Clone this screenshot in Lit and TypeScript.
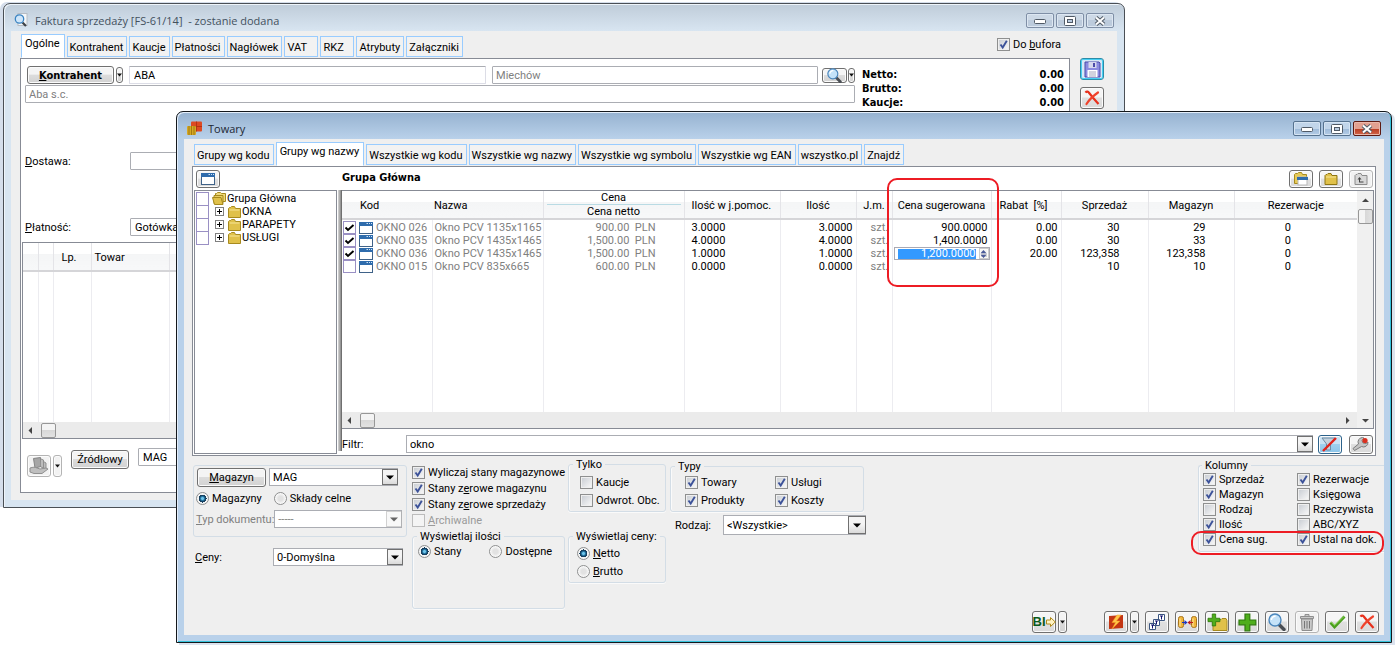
import { LitElement, html, css, svg, nothing, TemplateResult } from "lit";
import { customElement, property } from "lit/decorators.js";
import { classMap } from "lit/directives/class-map.js";

const controls = css`
  * { box-sizing: border-box; }
  button, input, select { font: inherit; color: inherit; margin: 0; }
  button {
    display: inline-flex; align-items: center; justify-content: center;
    padding: 0; border: 1px solid #707070; border-radius: 3px;
    background: linear-gradient(#f4f4f4 45%, #dcdcdc 50%, #d2d2d2);
    box-shadow: inset 0 0 0 1px #fbfbfb;
  }
`;

/* ---------- icons ---------- */
const ico = (w: number, h: number, body: unknown) =>
  html`<svg width=${w} height=${h} viewBox="0 0 ${w} ${h}" aria-hidden="true">${body}</svg>`;

const caret = () => ico(5, 4, svg`<path d="M0 0.5h5L2.5 3.5z" fill="#111"/>`);
const caretWide = () => ico(8, 5, svg`<path d="M0 0.5h8L4 4.5z" fill="#000"/>`);
const lens = () => ico(18, 18, svg`
  <path d="M11 11.5l5 5" stroke="#4a4e54" stroke-width="3.4" stroke-linecap="round"/>
  <circle cx="7" cy="7" r="6" fill="#c4e2f8" stroke="#4a86bc" stroke-width="1.4"/>
  <path d="M3.4 7a3.8 3.8 0 0 1 4.2-3.8" fill="none" stroke="#fff" stroke-width="1.4"/>`);
const cross = () => ico(16, 16, svg`
  <path d="M1.5 2.6C2.6 1 4.3 1.6 5 2.8l4 5 5.500 6.200" stroke="#e8301c" stroke-width="2.200" fill="none"/>
  <path d="M14 2.500C9 6 5 10 2.500 14" stroke="#f0432c" stroke-width="2.200" fill="none" stroke-linecap="round"/>`);
const disk = () => ico(17, 17, svg`
  <path d="M1 1h14l1 1v14H1z" fill="#8c8ce0" stroke="#4b4ba8"/>
  <rect x="4.5" y="1" width="8" height="6" fill="#d6d8ee"/><rect x="9" y="2" width="2" height="4" fill="#4b4ba8"/>
  <rect x="3.5" y="9" width="10" height="7" fill="#fff"/>
  <path d="M5 11h7M5 13h7M5 15h7" stroke="#a4a6bd"/>`);
const winIcon = () => ico(14, 12, svg`
  <rect x="0.5" y="0.5" width="13" height="11" fill="#fff" stroke="#3f6288"/>
  <rect x="0" y="0" width="14" height="4" fill="#2f6cac"/>
  <path d="M7.5 1.5h1.5M10 1.5h1M12 1.5h1" stroke="#cfe2f5"/>`);
const folder = () => ico(13, 12, svg`
  <path d="M0.5 2.5l1-1h1l1-1h3l1 2h5v9h-12z" fill="#e0c14a" stroke="#a78a1e"/>
  <path d="M1.5 4h10" stroke="#f7e697"/>`);
const folders = () => ico(14, 13, svg`
  <path d="M3.5 1.5h1l1-1h3l1 1h4v8h-10z" fill="#efd978" stroke="#a78a1e"/>
  <path d="M2 3.5h9v8H2z" fill="#e8cd62" stroke="#a78a1e"/>
  <path d="M0.5 5.5h8.5l2 7H2.5z" fill="#e0c14a" stroke="#a78a1e"/>`);
const folderOpen = () => ico(16, 15, svg`
  <path d="M1.5 3.5l1-1h2l1-1h3l1 2h4v9h-12z" fill="#e6ca58" stroke="#a78a1e"/>
  <rect x="5" y="6" width="9" height="8" fill="#fff" stroke="#b9b9b9"/><rect x="4" y="6" width="11" height="3" fill="#2f6cac"/>`);
const folderBig = () => ico(14, 14, svg`
  <path d="M1 3.5l1-1h1l1-1h3l1 2h5v9H1z" fill="#e0c14a" stroke="#8f7614"/><path d="M2 5h10" stroke="#f7e697"/>`);
const folderUp = () => ico(14, 14, svg`
  <path d="M1 3.5l1-1h1l1-1h3l1 2h5v9H1z" fill="#d8d8d8" stroke="#8c8c8c"/>
  <path d="M5 10h4.5M5.5 10V6" stroke="#444" fill="none"/><path d="M3.5 7.5l2-2.5 2 2.5z" fill="#444"/>`);
const bricks = () => ico(16, 15, svg`
  <rect x="4" y="0.500" width="11" height="10" fill="#dd4a22" rx="1"/><path d="M4 5.500h11M9.500 0.500v10" stroke="#a92c10" stroke-width="0.800"/>
  <rect x="0" y="5" width="9" height="9" fill="#d6a824" rx="1"/><path d="M2 5v9M4.500 5v9M7 5v9" stroke="#93700c" stroke-width="0.800"/>`);
const docLens = () => ico(15, 15, svg`
  <rect x="4" y="0.5" width="9" height="12" fill="#f5f7f9" stroke="#b5bcc4"/>
  <path d="M8.5 9.5l3.5 3.5" stroke="#3d4248" stroke-width="2.2"/>
  <circle cx="5.5" cy="6" r="4.2" fill="#cfe6fa" stroke="#3b84c2" stroke-width="1.3"/>`);
const hand = () => ico(20, 18, svg`
  <path d="M4.500 1.500l7-1 0.500 9-6 1.500z" fill="#a6a6a6" stroke="#858585"/>
  <path d="M12 2l2.500 1v8l-2.500-1M14.500 4.500l2.500 1.500v6l-2.500-1" fill="#bdbdbd" stroke="#909090"/>
  <path d="M1 11c3-1 5-1 7 0l3 1 6-1 2 1-6 4.500H5L1 15z" fill="#bfbfbf" stroke="#909090"/>`);
const funnel = () => ico(18, 15, svg`
  <path d="M1 1h13l-4.5 6v6h-4V7z" fill="#c3d2de" stroke="#6f8ba3"/><path d="M2 14L15 1" stroke="#e0241b" stroke-width="2.4"/>`);
const wrench = () => ico(18, 16, svg`
  <path d="M2.500 14.500l-1.500-2 5.500-4.500a4.500 4.500 0 0 1 4-6.500l1.500 0.500-2 2.500 1 2.500 3 0.500 2-1.500a4.500 4.500 0 0 1-6.500 4.500z" fill="#c4c4c4" stroke="#7c7c7c"/>
  <circle cx="13" cy="4.500" r="2.600" fill="#d9301f"/>`);
const bi = () => html`<span class="bi">BI</span>${ico(10, 12, svg`
  <path d="M0.5 4h4V1.5L9.3 6 4.5 10.5V8h-4z" fill="#fff3c4" stroke="#b08a1b"/>`)}`;
const bolt = () => ico(16, 16, svg`
  <path d="M1 2l14-1v13L1 15z" fill="#c33614"/><path d="M9 1L4 8.5h3.5L4 15l8-8H8.5L13 1z" fill="#ffc64a" stroke="#f9a11f" stroke-width="0.5"/>`);
const tees = () => ico(18, 18, svg`
  <g fill="#fff" stroke="#3a5580"><path d="M10.5 1.5h6v6h-6zM5.5 6.5h6v6h-6zM1.5 10.5h6v6h-6z"/></g>
  <path d="M12 3h3M13.5 3v3.500M7 8h3M8.500 8v3.500M3 12h3M4.500 12v3.500" stroke="#10106e"/>`);
const barrels = () => ico(19, 14, svg`
  <g fill="#f0b53a" stroke="#a9741a"><rect x="0.5" y="1.5" width="5" height="11" rx="2"/><rect x="13.5" y="1.5" width="5" height="11" rx="2"/></g>
  <path d="M2 3.5v8M15 3.5v8" stroke="#ffe9a8"/>
  <path d="M4 7.5h4" stroke="#1a35c0"/><path d="M6.500 5L9.500 7.500l-3 2.500z" fill="#1a35c0"/>
  <path d="M11 7.5h4" stroke="#c01a1a"/><path d="M12.500 5L9.500 7.500l3 2.500z" fill="#c01a1a"/>`);
const plusShape = (x: number, y: number, s: number) => svg`
  <path transform="translate(${x} ${y}) scale(${s})" d="M5 0h4v5h5v4H9v5H5V9H0V5h5z" fill="#4fae1c" stroke="#2f7a0c"/>`;
const plus = () => ico(19, 19, plusShape(1, 1, 1.2));
const folderPlus = () => ico(21, 18, svg`
  <path d="M6 6.5h8l1-1h4l1 2v10H6z" fill="#e0c14a" stroke="#a78a1e"/>${plusShape(1, 1, 0.85)}`);
const bin = () => ico(14, 17, svg`
  <path d="M5 2V0.5h4V2M0.5 2.5h13v2H0.5zM1.5 5h11l-0.5 11.5h-10z" fill="#c9c9c9" stroke="#8f8f8f"/>
  <path d="M4.5 7v7.5M7 7v7.5M9.5 7v7.5" stroke="#777"/>`);
const tick = () => ico(17, 14, svg`
  <path d="M1.5 7.5l4 4.5L15.5 1.5" fill="none" stroke="#4a9e1e" stroke-width="2.8"/>
  <path d="M2 7l3.500 3.500L15 1.500" fill="none" stroke="#86d04f" stroke-width="1"/>`);
const arrow = (dir: "l" | "r" | "u" | "d") =>
  ico(7, 7, svg`<path d=${{ l: "M5 0v7L1.500 3.500z", r: "M2 0v7L5.500 3.500z", u: "M0 5h7L3.500 1.500z", d: "M0 2h7L3.500 5.500z" }[dir]} fill="#444"/>`);

/* ---------- framed window ---------- */
@customElement("desk-window")
export class DeskWindow extends LitElement {
  @property() caption = "";
  @property({ type: Boolean, reflect: true }) active = false;
  static styles = [controls, css`
    :host { display: block; }
    .frame {
      border: 1px solid #4a4f55; border-radius: 7px 7px 0 0; padding: 0 7px 7px;
      background: linear-gradient(#bfccd9, #d8e5f1 27px); box-shadow: inset 1px 1px 0 #eef4fa, -3px -1px 0 #d5deeb;
    }
    :host([active]) .frame {
      border-color: #14181c;
      background: linear-gradient(#96b2d0, #b9d1ea 27px);
      box-shadow: inset 1px 1px 0 #e4eefa, inset -1px -1px 0 #35c3dc, 3px 2px 0 #dbe3ee;
    }
    .bar { height: 27px; display: flex; align-items: center; gap: 5px; padding: 6px 3px 0 3px; }
    .bar ::slotted(*) { display: block; width: 16px; height: 16px; }
    h1 {
      margin: 0; flex: 1; white-space: pre; color: #43515e;
      font: 400 11px/16px "Open Sans", "Noto Sans", sans-serif;
    }
    :host([active]) h1 { color: #1c2733; }
    .tools { display: flex; gap: 2px; }
    .tools button {
      width: 28px; height: 15px; border-color: #7f8fa6; border-radius: 2px;
      background: linear-gradient(#cdd9e6 50%, #bccbdc 50%); box-shadow: inset 0 0 0 1px #dde7f2;
    }
    :host([active]) .tools button { border-color: #56728f; background: linear-gradient(#c1d5ea 50%, #9cb9d8 50%, #b4cce6); box-shadow: inset 0 0 0 1px #d5e4f3; }
    :host([active]) .tools button.close {
      border-color: #5d1a12; background: linear-gradient(#e2a090 50%, #b83a20 50%, #d2664a); box-shadow: inset 0 0 0 1px #eab7aa;
    }
    .body { background: #efefef; display: flow-root; }
  `];
  render() {
    return html`<section class="frame" aria-label=${this.caption}>
      <header class="bar">
        <slot name="icon"></slot>
        <h1>${this.caption}</h1>
        <div class="tools">
          <button aria-label="Minimalizuj">${ico(12, 6, svg`<rect x="0.5" y="1.5" width="11" height="4" rx="1" fill="#fff" stroke="#505a66"/>`)}</button>
          <button aria-label="Maksymalizuj">${ico(12, 10, svg`<rect x="0.5" y="0.5" width="11" height="9" rx="1" fill="#fff" stroke="#505a66"/><rect x="3.5" y="3.5" width="5" height="3" fill="#b9cbe0" stroke="#505a66"/>`)}</button>
          <button class="close" aria-label="Zamknij">${ico(12, 10, svg`<path d="M2 1.5l8 7M10 1.5l-8 7" stroke="#505a66" stroke-width="4"/><path d="M2 1.5l8 7M10 1.5l-8 7" stroke="#fff" stroke-width="2"/>`)}</button>
        </div>
      </header>
      <div class="body"><slot></slot></div>
    </section>`;
  }
}

type Item = { label: string | TemplateResult; on?: boolean; off?: boolean };

const products = [
  { on: true, code: "OKNO 026", name: "Okno PCV 1135x1165", price: "900.00", qty: "3.0000", sug: "900.0000", disc: "0.00", sold: "30", stock: "29" },
  { on: true, code: "OKNO 035", name: "Okno PCV 1435x1465", price: "1,500.00", qty: "4.0000", sug: "1,400.0000", disc: "0.00", sold: "30", stock: "33" },
  { on: true, code: "OKNO 036", name: "Okno PCV 1435x1465", price: "1,500.00", qty: "1.0000", sug: "1,200.0000", disc: "20.00", sold: "123,358", stock: "123,358", edit: true },
  { on: false, code: "OKNO 015", name: "Okno PCV 835x665", price: "600.00", qty: "0.0000", sug: "", disc: "", sold: "10", stock: "10" },
];

@customElement("app-root")
export class AppRoot extends LitElement {
  static styles = [controls, css`
    :host {
      display: block; position: relative; min-height: 100vh; overflow: hidden; background: #fff;
      color: #000; font: 11px/13px Roboto, "Noto Sans", sans-serif; white-space: nowrap;
    }
    b, .bold, .totals { font-family: "DejaVu Sans Condensed", "Noto Sans", sans-serif; font-weight: 700; }
    svg { display: block; flex: none; }
    desk-window { position: absolute; }
    .invoice { top: 3px; left: 3px; right: 270px; }
    .goods { top: 111px; left: 176px; right: 3px; }

    /* tabs */
    .tabs { display: flex; align-items: flex-end; gap: 2px; padding-left: 10px; height: 27px; }
    .tabs button {
      height: 21px; min-width: 34px; margin-bottom: 1px; padding: 1px 3px 0 2px; border: 1px solid #99ccff; border-radius: 0;
      background: #f2f2f2; box-shadow: none; justify-content: flex-start;
    }
    .tabs button.sel { height: 24px; margin: 0; padding: 0 4px 5px 3px; background: #fff; border-bottom-color: #fff; }

    /* fields */
    .text { height: 18px; padding: 0 4px; border: 1px solid #abadb3; background: #fff; border-radius: 1px; min-width: 0; }
    .dim { color: #808080; }
    .push { height: 19px; padding: 0 10px; }
    .icon { width: 24px; height: 22px; background: linear-gradient(#f5f5f5 45%, #e0e0e0 50%, #dadada); flex: none; }
    .icon.low { height: 19px; }
    .drop { width: 9px; height: 22px; flex: none; }
    .pale { border-color: #b4b4b4; background: #f2f2f2; }
    .hot { border-color: #2c8ca8; box-shadow: inset 0 0 0 1px #46d0f4; background: #d8e8f6; }
    .pressed { border-color: #2c628b; background: linear-gradient(#c9e3f5 45%, #9fd0ee 50%, #8cc5ea); }
    .combo { position: relative; display: block; height: 18px; }
    .combo select, .combo input {
      appearance: none; width: 100%; height: 100%; padding: 0 18px 0 3px; border: 1px solid #abadb3; border-radius: 0; background: #fff; display: block; color: inherit; opacity: 1;
    }
    .combo .arr {
      position: absolute; top: 1px; right: 0; bottom: 1px; width: 16px; border: 1px solid #707070; background: linear-gradient(#f4f4f4 45%, #dadada);
      pointer-events: none; display: flex; align-items: center; justify-content: center;
    }
    .combo.dim .arr { border-color: #b4b4b4; background: #f4f4f4; opacity: .6; }

    label.opt { display: inline-flex; align-items: center; gap: 3px; height: 16px; }
    label.opt.dim { color: #9a9a9a; }
    input[type="checkbox"], input[type="radio"] { appearance: none; flex: none; width: 13px; height: 13px; border: 1px solid #8e8f8f; }
    input[type="checkbox"] {
      background: no-repeat center / 11px 11px, linear-gradient(135deg, #cbcfd5, #f6f6f6) content-box #f4f4f4; padding: 1px;
    }
    input[type="checkbox"]:checked {
      background-image: url("data:image/svg+xml,%3Csvg xmlns='http://www.w3.org/2000/svg' viewBox='0 0 11 11'%3E%3Cpath d='M2.500 5.500l2.200 3L8.800 1.800' fill='none' stroke='%233c5299' stroke-width='1.900'/%3E%3C/svg%3E"), linear-gradient(135deg, #cbcfd5, #f6f6f6);
    }
    input[type="checkbox"]:disabled { border-color: #bcbcbc; background: #f4f4f4; }
    input[type="checkbox"].sq { border: 1px solid #9a90c4; background: #fff; }
    input[type="checkbox"].sq:checked {
      background: #fff url("data:image/svg+xml,%3Csvg xmlns='http://www.w3.org/2000/svg' viewBox='0 0 11 11'%3E%3Cpath d='M1.500 5.500l2.500 2.500L9.500 3' fill='none' stroke='%23000' stroke-width='1.900'/%3E%3C/svg%3E") center / 11px 11px no-repeat;
    }
    input[type="radio"] { border-radius: 50%; background: radial-gradient(circle, #e2e2e2 30%, #fbfbfb 70%); }
    input[type="radio"]:checked { background: radial-gradient(circle, #6fc4e8 0 1px, #2378a8 2px, #17405f 3px 4px, #f4f4f4 4px); }

    fieldset { margin: 0; padding: 0 0 0 8px; border: 1px solid #d3dde6; border-radius: 3px; box-shadow: inset 1px 0 0 #fafafa, 0 1px 0 #fafafa; min-width: 0; }
    legend { padding: 0 3px; margin-left: -4px; line-height: 13px; }

    /* invoice window */
    .top { display: flex; align-items: center; justify-content: space-between; padding-right: 56px; }
    .split { display: flex; gap: 10px; padding: 0 13px 7px 9px; }
    .sheet { flex: 1; min-width: 0; border: 1px solid #878b95; background: #fff; padding: 7px 5px 15px 4px; }
    .side { display: flex; flex-direction: column; gap: 7px; }
    .head { display: grid; grid-template-columns: 1fr 203px; column-gap: 6px; }
    .line { display: flex; align-items: center; }
    .head .line { padding-left: 2px; height: 18px; }
    .who { width: 87px; height: 18px; }
    .mini { width: 7px; height: 16px; margin-left: 2px; }
    .city { flex: 326 1 0; margin-left: 6px; padding-left: 3px; }
    .name { flex: 357 1 0; margin-left: 6px; border-color: #dcdde6; border-top-color: #abadb3; }
    .find { width: 25px; height: 15px; margin-left: 4px; }
    .find svg { width: 15px; height: 15px; }
    .find + .mini { margin-left: 1px; height: 15px; }
    .company { display: block; width: 100%; margin-top: 1px; padding-left: 3px; }
    .totals { margin: 0; padding: 2px 0 0 1px; display: grid; grid-template-columns: 1fr auto; line-height: 14px; align-content: start; }
    .totals dd { margin: 0; text-align: right; }
    .field { display: flex; align-items: center; height: 18px; }
    .field label { width: 105px; }
    .field input { width: 330px; }
    .delivery { margin-top: 42px; }
    .payment { margin-top: 48px; margin-bottom: 6px; }
    .box { border: 1px solid #878b95; background: #fff; margin-left: -3px; }
    table { border-collapse: collapse; table-layout: fixed; width: 100%; }
    th {
      font-weight: 400; height: 28px; padding: 2px 0 0; border-right: 1px solid #e4e4e8; border-bottom: 2px solid #d5d5d8;
      background: linear-gradient(#fff 40%, #f4f5f6 40%, #f7f8f9);
    }
    th:last-child, td:last-child { border-right: 0; }
    td { border-right: 1px solid #ececf0; padding: 0; overflow: hidden; }
    .lines .pad td { height: 151px; }
    .lines th { text-align: left; padding-left: 3px; }
    .lines th.num { padding-left: 8px; }
    .hscroll { height: 16px; background: #ebebeb; display: flex; align-items: center; padding: 0 6px 0 4px; }
    .thumb { width: 15px; height: 15px; margin-left: 7px; border: 1px solid #979797; border-radius: 2px; background: linear-gradient(#f4f4f4 45%, #d8d8d8 50%, #e2e2e2); }
    .foot { display: flex; gap: 9px; padding: 9px 0 0 2px; align-items: flex-start; }
    .foot .pair { margin-top: 7px; }
    .pair { display: flex; gap: 2px; }
    .foot .push { margin-top: 2px; width: 58px; padding: 0; }
    .foot .text { width: 200px; }

    /* goods window */
    .panel { margin: 0 8px; border: 1px solid #878b95; background: #fff; padding-left: 1px; display: grid; grid-template-columns: 143px 5px 1fr; }
    .bar23 { height: 23px; display: flex; align-items: center; }
    .left .bar23 { padding-left: 2px; }
    .bar23 .icon { height: 18px; }
    .tree { height: 264px; border: 1px solid #878b95; padding: 1px; margin: 0; list-style: none; }
    .tree li { display: flex; align-items: center; height: 13px; }
    .tree .sq { height: 14px; margin-right: 3px; }
    .exp { width: 9px; height: 9px; margin: 0 4px 0 3px; border: 1px solid #808080; background: #fff; padding: 0; border-radius: 0; box-shadow: none; }
    .tree span { margin-left: 1px; }
    .bar-split { margin-top: 23px; height: 261px; background: linear-gradient(90deg, #fff 1px, #d8d8d8 1px, #8a8a8a 4px, #555); }
    .right { min-width: 0; padding-right: 1px; }
    .right .bar23 { gap: 6px; padding-right: 1px; }
    .right .bar23 b { flex: 1; padding-bottom: 2px; }
    .grid { border: 1px solid #878b95; border-left-width: 0; display: grid; grid-template-columns: 1fr 16px; }
    .rows { overflow: hidden; }
    .rows td { height: 13px; line-height: 13px; text-align: right; }
    .rows .gap td { height: 2px; }
    .rows .pad td { height: 139px; }
    .rows th.group { padding: 0; }
    .rows .c1 { width: 90px; } .rows .c2 { width: 111px; } .rows .c3 { width: 141px; } .rows .c4 { width: 96px; }
    .rows .c5 { width: 76px; } .rows .c6 { width: 36px; } .rows .c7 { width: 99px; } .rows .c8 { width: 70px; }
    .rows .c9 { width: 87px; } .rows .c10 { width: 86px; }
    .rows .l { text-align: left; }
    th.l.kod { padding-left: 18px; border-right: 0; }
    td.code > div { display: flex; align-items: center; gap: 3px; padding-left: 1px; height: 13px; }
    .nm { padding-left: 2px; }
    .price { padding-right: 28px; white-space: pre; }
    .aux { padding-left: 7px; }
    .r3 { padding-right: 3px; }
    .unit { padding-left: 14px; }
    .sold { padding-right: 28px; }
    .resv { padding-right: 66px; }
    .rab { padding-left: 8px; white-space: pre; }
    .stack { display: block; margin: 0 3px; line-height: 12px; }
    .stack + .stack { border-top: 1px solid #b9dbe4; line-height: 13px; }
    .spin { display: flex; align-items: center; height: 13px; margin: 0 1px; border: 1px solid #a9a9b4; background: #fff; padding-left: 3px; }
    .spin input { flex: 1; min-width: 0; height: 10px; line-height: 10px; padding: 0; border: 0; text-align: right; color: #fff; background: #3399ff; }
    .spin button { width: 10px; height: 11px; margin-left: 3px; border-color: #ccc; border-radius: 0; }
    .vscroll { background: #f0f0f0; display: flex; flex-direction: column; align-items: center; padding: 6px 0; }
    .vscroll .thumb { margin: 5px 0 auto; background: linear-gradient(90deg, #f4f4f4 45%, #d8d8d8 50%, #e2e2e2); }
    .grid .hscroll { grid-column: 1; }
    .hscroll .end { margin-left: auto; }
    .corner { background: #f0f0f0; display: flex; align-items: center; justify-content: center; }
    .filter { display: flex; align-items: center; height: 26px; padding: 4px 1px 0 0; }
    .filter label { width: 64px; }
    .filter .combo { flex: 1; margin-right: 5px; }
    .filter .icon + .icon { margin-left: 7px; }

    .below { display: flex; align-items: flex-start; padding-left: 9px; min-height: 155px; }
    .store { width: 214px; padding-top: 9px; margin-right: 5px; }
    .card { border: 1px solid #d3dde6; border-radius: 3px; padding: 2px 4px 8px 3px; }
    .card .push { width: 69px; height: 19px; padding: 0; margin-right: 3px; }
    .card .combo { width: 129px; }
    .row { display: flex; align-items: center; height: 18px; }
    .row.radios { height: 24px; gap: 12px; margin-left: -1px; }
    .row.type, .row.prices { justify-content: space-between; }
    .row.type label { margin-left: -1px; }
    .row.prices { margin-top: 11px; padding: 0 4px 0 2px; }
    .row.prices .combo { width: 130px; }
    .flags { width: 153px; padding-top: 8px; margin-right: 3px; }
    .flags label.opt { display: flex; }
    .flags fieldset { margin-top: 2px; height: 79px; }
    .twin { display: flex; gap: 28px; margin-left: -3px; }
    .col { width: 98px; margin: 2px 4px 0 0; }
    .col label.opt, .kinds label.opt { display: flex; height: 18px; }
    .col fieldset { padding: 0 0 2px 9px; }
    .col fieldset legend { margin-left: -5px; }
    .col fieldset + fieldset { margin-top: 18px; }
    .col .checks { padding-top: 2px; margin-left: 2px; }
    .col .modes { padding-top: 1px; margin-left: -1px; }
    .kinds { width: 196px; padding-top: 4px; }
    .kinds fieldset { width: 194px; padding: 0 0 2px 14px; }
    .kinds fieldset legend { margin-left: -10px; }
    .kinds .two { display: grid; grid-template-columns: 90px 1fr; }
    .row.kind { margin-top: 3px; height: 20px; justify-content: space-between; padding-left: 5px; }
    .row.kind .combo { width: 143px; height: 20px; }
    .row.kind .combo .arr { width: 18px; }
    .cols { margin-left: auto; width: 186px; padding-top: 3px; }
    .cols fieldset { padding: 0 0 4px 4px; border-right: 0; border-radius: 3px 0 0 3px; }
    .cols fieldset legend { margin-left: -1px; }
    .cols .two { display: grid; grid-template-columns: 94px 1fr; }
    .cols label.opt { height: 15px; }
    .actions { display: flex; justify-content: flex-end; gap: 6px; padding: 0 5px 2px; }
    .actions .first { margin-right: 31px; }
    .bi { font: 700 13px/14px "Liberation Sans", sans-serif; color: #0b5a1c; }
    .mark { position: absolute; border: 2px solid #ed1c24; border-radius: 10px; pointer-events: none; }
    .mark.column { left: 711px; top: 67px; width: 112px; height: 109px; }
    .mark.options { right: 8px; top: 420px; width: 193px; height: 24px; }
  `];

  private tabs(names: string[], sel: number) {
    return html`<div class="tabs" role="tablist">${names.map((n, i) => html`
      <button role="tab" class=${classMap({ sel: i === sel })} aria-selected=${i === sel}>${n}</button>`)}</div>`;
  }
  private opt(i: Item, type = "checkbox", name = "") {
    return html`<label class=${classMap({ opt: true, dim: !!i.off })}>
      <input type=${type} name=${name || nothing} ?checked=${i.on} ?disabled=${i.off}>${i.label}</label>`;
  }
  private combo(id: string, value: string, dim = false) {
    return html`<span class=${classMap({ combo: true, dim })}>
      <select id=${id} aria-label=${id} ?disabled=${dim}><option>${value}</option></select><span class="arr">${caretWide()}</span></span>`;
  }
  private tool(label: string, icon: TemplateResult, cls = "") {
    return html`<button class="icon ${cls}" aria-label=${label}>${icon}</button>`;
  }
  private drop(cls = "") {
    return html`<button class="drop ${cls}" aria-label="Więcej">${caret()}</button>`;
  }

  private invoice() {
    return html`<desk-window class="invoice" caption="Faktura sprzedaży [FS-61/14]  - zostanie dodana">
      <span slot="icon">${docLens()}</span>
      <div class="top">
        ${this.tabs(["Ogólne", "Kontrahent", "Kaucje", "Płatności", "Nagłówek", "VAT", "RKZ", "Atrybuty", "Załączniki"], 0)}
        ${this.opt({ label: html`<span>Do <u>b</u>ufora</span>`, on: true })}
      </div>
      <div class="split">
        <div class="sheet">
          <div class="head">
            <div>
              <div class="line">
                <button class="who bold"><span><u>K</u>ontrahent</span></button>
                <button class="mini" aria-label="Więcej">${caret()}</button>
                <input class="text name" aria-label="Kod kontrahenta" value="ABA">
                <input class="text city dim" aria-label="Miasto" value="Miechów">
                <button class="find" aria-label="Szukaj">${lens()}</button>
                <button class="mini" aria-label="Więcej">${caret()}</button>
              </div>
              <input class="text company dim" aria-label="Nazwa" value="Aba s.c.">
            </div>
            <dl class="totals"><dt>Netto:</dt><dd>0.00</dd><dt>Brutto:</dt><dd>0.00</dd><dt>Kaucje:</dt><dd>0.00</dd></dl>
          </div>
          <div class="field delivery"><label for="delivery"><u>D</u>ostawa:</label><input id="delivery" class="text"></div>
          <div class="field payment"><label for="payment"><u>P</u>łatność:</label><input id="payment" class="text" value="Gotówka"></div>
          <div class="box">
            <table class="lines">
              <colgroup><col style="width:15px"><col style="width:15px"><col style="width:38px"><col style="width:78px"><col></colgroup>
              <thead><tr><th></th><th></th><th class="num">Lp.</th><th>Towar</th><th></th></tr></thead>
              <tbody><tr class="pad"><td></td><td></td><td></td><td></td><td></td></tr></tbody>
            </table>
            <div class="hscroll">${arrow("l")}<div class="thumb"></div></div>
          </div>
          <div class="foot">
            <div class="pair">${this.tool("Przekaż", hand(), "pale")}${this.drop("pale")}</div>
            <button class="push">Źródłowy</button>
            <input class="text" aria-label="Magazyn źródłowy" value="MAG">
          </div>
        </div>
        <div class="side">${this.tool("Zapisz", disk(), "hot")}${this.tool("Anuluj", cross())}</div>
      </div>
    </desk-window>`;
  }

  private productTable() {
    return html`<table>
      <colgroup>${Array.from({ length: 11 }, (_, i) => html`<col class="c${i + 1}">`)}</colgroup>
      <thead><tr>
        <th class="l kod">Kod</th><th class="l nm">Nazwa</th>
        <th class="group"><span class="stack">Cena</span><span class="stack">Cena netto</span></th>
        <th class="l aux">Ilość w j.pomoc.</th><th>Ilość</th><th>J.m.</th><th>Cena sugerowana</th>
        <th class="l rab">Rabat  [%]</th><th>Sprzedaż</th><th>Magazyn</th><th>Rezerwacje</th>
      </tr></thead>
      <tbody>
        <tr class="gap">${Array.from({ length: 11 }, () => html`<td></td>`)}</tr>
        ${products.map((p) => html`<tr>
          <td class="l code dim"><div><input class="sq" type="checkbox" aria-label=${p.code} ?checked=${p.on}>${winIcon()}${p.code}</div></td>
          <td class="l nm dim">${p.name}</td><td class="price dim">${p.price}  PLN</td>
          <td class="l aux">${p.qty}</td><td class="r3">${p.qty}</td><td class="l unit dim">szt.</td>
          <td class=${p.edit ? "" : "r3"}>${p.edit
            ? html`<div class="spin"><input aria-label="Cena sugerowana" value=${p.sug}><button aria-label="Zmień">${ico(7, 8, svg`<path d="M0.5 3.3h6L3.5 0zM0.5 4.7h6L3.5 8z" fill="#4a5a9a"/>`)}</button></div>`
            : p.sug}</td>
          <td class="r3">${p.disc}</td><td class="sold">${p.sold}</td><td class="sold">${p.stock}</td><td class="resv">0</td>
        </tr>`)}
        <tr class="pad">${Array.from({ length: 11 }, () => html`<td></td>`)}</tr>
      </tbody>
    </table>`;
  }

  private goods() {
    const cols: Item[] = [
      { label: "Sprzedaż", on: true }, { label: "Rezerwacje", on: true }, { label: "Magazyn", on: true }, { label: "Księgowa" },
      { label: "Rodzaj" }, { label: "Rzeczywista" }, { label: "Ilość", on: true }, { label: "ABC/XYZ" },
      { label: "Cena sug.", on: true }, { label: "Ustal na dok.", on: true },
    ];
    return html`<desk-window class="goods" caption="Towary" active>
      <span slot="icon">${bricks()}</span>
      ${this.tabs(["Grupy wg kodu", "Grupy wg nazwy", "Wszystkie wg kodu", "Wszystkie wg nazwy", "Wszystkie wg symbolu", "Wszystkie wg EAN", "wszystko.pl", "Znajdź"], 1)}
      <div class="panel">
        <div class="left">
          <div class="bar23">${this.tool("Okno", winIcon())}</div>
          <ul class="tree">
            <li><input class="sq" type="checkbox" aria-label="Grupa Główna">${folders()}<span>Grupa Główna</span></li>
            ${["OKNA", "PARAPETY", "USŁUGI"].map((g) => html`<li><input class="sq" type="checkbox" aria-label=${g}>
              <button class="exp" aria-label="Rozwiń">${ico(7, 7, svg`<path d="M1 3.5h5M3.5 1v5" stroke="#000"/>`)}</button>${folder()}<span>${g}</span></li>`)}
          </ul>
        </div>
        <div class="bar-split"></div>
        <div class="right">
          <div class="bar23"><b>Grupa Główna</b>
            ${this.tool("Otwórz grupę", folderOpen())}${this.tool("Grupa", folderBig())}${this.tool("Poziom wyżej", folderUp(), "pale")}</div>
          <div class="grid">
            <div class="rows">${this.productTable()}</div>
            <div class="vscroll">${arrow("u")}<div class="thumb"></div></div>
            <div class="hscroll">${arrow("l")}<div class="thumb"></div><span class="end">${arrow("r")}</span></div>
            <div class="corner">${arrow("d")}</div>
          </div>
          <div class="filter">
            <label for="filter">Filtr:</label>
            <span class="combo"><input id="filter" value="okno"><span class="arr">${caretWide()}</span></span>
            ${this.tool("Filtruj", funnel(), "low pressed")}${this.tool("Ustawienia", wrench(), "low")}
          </div>
        </div>
      </div>
      <div class="below">
        <div class="store">
          <div class="card">
            <div class="row"><button class="push"><span><u>M</u>agazyn</span></button>${this.combo("magazyn", "MAG")}</div>
            <div class="row radios">${this.opt({ label: "Magazyny", on: true }, "radio", "where")}${this.opt({ label: "Składy celne" }, "radio", "where")}</div>
            <div class="row type"><label class="dim" for="typ"><u>T</u>yp dokumentu:</label>${this.combo("typ", "-----", true)}</div>
          </div>
          <div class="row prices"><label for="ceny"><u>C</u>eny:</label>${this.combo("ceny", "0-Domyślna")}</div>
        </div>
        <div class="flags">
          ${this.opt({ label: "Wyliczaj stany magazynowe", on: true })}
          ${this.opt({ label: html`<span>Stany z<u>e</u>rowe magazynu</span>`, on: true })}
          ${this.opt({ label: html`<span>Stany z<u>e</u>rowe sprzedaży</span>`, on: true })}
          ${this.opt({ label: html`<span><u>A</u>rchiwalne</span>`, off: true })}
          <fieldset><legend>Wyświetlaj ilości</legend>
            <div class="twin">${this.opt({ label: "Stany", on: true }, "radio", "qty")}${this.opt({ label: "Dostępne" }, "radio", "qty")}</div></fieldset>
        </div>
        <div class="col">
          <fieldset><legend>Tylko</legend><div class="checks">${this.opt({ label: "Kaucje" })}${this.opt({ label: "Odwrot. Obc." })}</div></fieldset>
          <fieldset><legend>Wyświetlaj ceny:</legend><div class="modes">
            ${this.opt({ label: html`<span><u>N</u>etto</span>`, on: true }, "radio", "price")}
            ${this.opt({ label: html`<span><u>B</u>rutto</span>` }, "radio", "price")}</div></fieldset>
        </div>
        <div class="kinds">
          <fieldset><legend>Typy</legend><div class="two">
            ${["Towary", "Usługi", "Produkty", "Koszty"].map((label) => this.opt({ label, on: true }))}</div></fieldset>
          <div class="row kind"><label for="rodzaj">Rodzaj:</label>${this.combo("rodzaj", "<Wszystkie>")}</div>
        </div>
        <div class="cols">
          <fieldset><legend>Kolumny</legend><div class="two">${cols.map((c) => this.opt(c))}</div></fieldset>
        </div>
      </div>
      <div class="actions">
        <div class="pair first">${this.tool("BI", bi())}${this.drop()}</div>
        <div class="pair">${this.tool("Operacje", bolt())}${this.drop()}</div>
        ${this.tool("Hierarchia", tees())}${this.tool("Zamienniki", barrels())}${this.tool("Dodaj grupę", folderPlus())}
        ${this.tool("Dodaj", plus())}${this.tool("Podgląd", lens())}${this.tool("Usuń", bin(), "pale")}
        ${this.tool("Zatwierdź", tick())}${this.tool("Zamknij", cross())}
      </div>
      <div class="mark column"></div>
      <div class="mark options"></div>
    </desk-window>`;
  }

  render() {
    return html`${this.invoice()}${this.goods()}`;
  }
}
